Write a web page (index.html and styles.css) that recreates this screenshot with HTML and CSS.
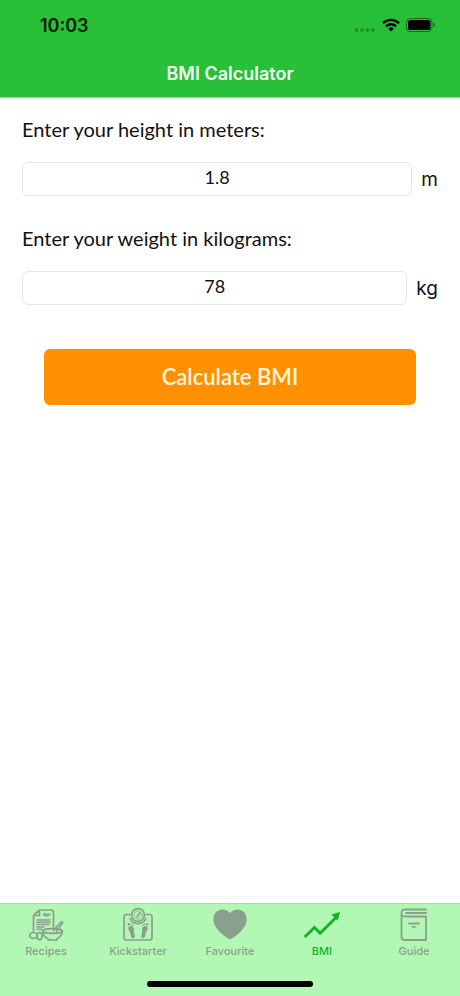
FILE: index.html
```html
<!DOCTYPE html>
<html lang="en">
<head>
  <meta charset="utf-8">
  <meta name="viewport" content="width=device-width, initial-scale=1">
  <title>BMI Calculator</title>
  <link rel="stylesheet" href="styles.css">
</head>
<body>
  <header class="header">
    <div class="status">
      <span class="time">10:03</span>
      <div class="indicators">
        <svg width="22" height="4" viewBox="0 0 22 4" fill="#000" fill-opacity=".25" aria-hidden="true"><circle cx="2.5" cy="2" r="1.9"/><circle cx="8" cy="2" r="1.9"/><circle cx="13.5" cy="2" r="1.9"/><circle cx="19" cy="2" r="1.9"/></svg>
        <svg class="wifi" width="18" height="14" viewBox="0 0 18 14" fill="none" stroke="#000" stroke-width="2.4" aria-hidden="true"><path d="M1 5.1a11.5 11.5 0 0 1 16 0M4 8.3a7.2 7.2 0 0 1 10 0"/><path d="M6.2 10.7a4 4 0 0 1 5.6 0L9 13.6z" fill="#000" stroke="none"/></svg>
        <svg width="30" height="14" viewBox="0 0 30 14" aria-hidden="true"><rect x=".5" y=".5" width="25.5" height="13" rx="4" fill="none" stroke="#000" stroke-opacity=".45"/><rect x="2" y="2" width="22.5" height="10" rx="2.6"/><path d="M27.5 4.8q1.6.7 1.6 2.2t-1.6 2.2z" fill-opacity=".5"/></svg>
      </div>
    </div>
    <h1 class="title">BMI Calculator</h1>
  </header>

  <main class="content">
    <form class="form">
      <div class="field">
        <label for="height">Enter your height in meters:</label>
        <div class="row"><input id="height" type="text" inputmode="decimal" value="1.8"><span class="unit">m</span></div>
      </div>
      <div class="field">
        <label for="weight">Enter your weight in kilograms:</label>
        <div class="row"><input id="weight" type="text" inputmode="decimal" value="78"><span class="unit">kg</span></div>
      </div>
      <button class="submit" type="button">Calculate BMI</button>
    </form>
  </main>

  <footer class="footer">
    <nav class="tabs">
      <a class="tab" href="#recipes">
        <svg width="36" height="36" viewBox="0 0 36 36" fill="none" stroke="currentColor" stroke-width="1.7" stroke-linejoin="round" stroke-linecap="round" aria-hidden="true">
          <path d="M5.500 24V8.500l6-5.500H23q2.500 0 2.500 2.500V20M11.500 3v5.500h-6"/>
          <path d="M15 7.200q1.200 3 3.500 1.500 2.300 1.500 3.500-1.500z" fill="currentColor" stroke-width=".8"/>
          <path d="M9 13h13M9 15.300h13M9 17.600h12M9 19.900h7M9 22.200h5" stroke-width="1.500"/>
          <ellipse cx="24.500" cy="24" rx="9.800" ry="2.400"/>
          <path d="M14.700 24q.3 5.500 5.300 7.800v1.200h9v-1.200q5-2.300 5.300-7.800M25.500 23.500l7-8q2-1.500 2.200.3L28.500 24"/>
          <ellipse cx="5.500" cy="28.500" rx="3.700" ry="3"/>
          <ellipse cx="11.600" cy="29" rx="2.500" ry="3.700"/>
        </svg>
        <span>Recipes</span>
      </a>
      <a class="tab" href="#kickstarter">
        <svg width="36" height="36" viewBox="0 0 36 36" fill="none" stroke="currentColor" stroke-width="1.700" stroke-linejoin="round" stroke-linecap="round" aria-hidden="true">
          <path d="M10 7.500H6.500Q4 7.500 4 10v20.500Q4 33 6.500 33h23q2.500 0 2.500-2.500V10q0-2.500-2.500-2.500H26"/>
          <circle cx="18" cy="8" r="6.400"/><circle cx="18" cy="8" r="4" stroke-width=".7"/>
          <path d="M17.200 9.700L20 5.700M10 11.500a8.800 8.800 0 0 0 16 0"/>
          <g fill="currentColor" stroke="none">
            <path d="M8.400 20.500c.6-2 4-1.900 5.200.6 1.100 2.500-.4 3.400.6 5.600 1.200 2.600.8 4.300-.8 4.600-1.900.3-2.500-1.500-2.800-4-.3-2.600-2.900-4.300-2.200-6.800z"/>
            <path d="M27.600 20.500c-.6-2-4-1.900-5.200.6-1.100 2.500.4 3.400-.6 5.600-1.200 2.600-.8 4.300.8 4.600 1.900.3 2.500-1.500 2.800-4 .3-2.600 2.900-4.300 2.200-6.800z"/>
            <circle cx="8.800" cy="17.300" r="1.200"/><circle cx="11.200" cy="17.300" r=".8"/><circle cx="13" cy="18.300" r=".8"/>
            <circle cx="27.200" cy="17.300" r="1.200"/><circle cx="24.800" cy="17.300" r=".8"/><circle cx="23" cy="18.300" r=".8"/>
          </g>
        </svg>
        <span>Kickstarter</span>
      </a>
      <a class="tab" href="#favourite">
        <svg width="36" height="36" viewBox="0 0 36 36" fill="currentColor" aria-hidden="true"><path d="M18 6.200C21.500 1.500 28.500 1.500 32.300 5.500c4 5 2.500 11.500-1.500 16.500-3.500 4.500-8 8.200-12.800 10.500C13.200 30.200 8.700 26.500 5.200 22 1.200 17-.3 10.500 3.700 5.500c3.800-4 10.800-4 14.300.7z"/></svg>
        <span>Favourite</span>
      </a>
      <a class="tab active" href="#bmi" aria-current="page">
        <svg width="36" height="36" viewBox="0 0 36 36" fill="none" stroke="currentColor" stroke-width="2.800" aria-hidden="true"><path d="M.8 30L10.500 20.500l5.700 5.700L33 9.500"/><path d="M36 5l-2.300 8.700-6.200-6.200z" fill="currentColor" stroke="none"/></svg>
        <span>BMI</span>
      </a>
      <a class="tab" href="#guide">
        <svg width="36" height="36" viewBox="0 0 36 36" fill="none" stroke="currentColor" stroke-width="1.800" stroke-linejoin="round" stroke-linecap="round" aria-hidden="true"><path d="M30 2.500H9Q5.500 2.500 5.500 6V30q0 3 3 3H30V9.500H9Q5.500 9.500 5.500 6M30 6H10"/><path d="M13 16.500h10M16.500 19.800h2.500"/></svg>
        <span>Guide</span>
      </a>
    </nav>
    <div class="home-bar"></div>
  </footer>
</body>
</html>
```

FILE: styles.css
```css
* {
  box-sizing: border-box;
}

body {
  margin: 0;
  min-height: 100vh;
  display: flex;
  flex-direction: column;
  background: #fff;
  color: #111;
  font-family: Inter, "Liberation Sans", sans-serif;
}

.header {
  background: #28c038;
  border-bottom: 1px solid #8bdc93;
}

.status {
  display: flex;
  align-items: center;
  justify-content: space-between;
  height: 50px;
  padding: 0 24px 0 40px;
}

.time {
  color: #041806;
  font-size: 18px;
  font-weight: 600;
}

.indicators {
  display: flex;
  align-items: center;
  gap: 6px;
}

.indicators svg:first-child {
  align-self: flex-end;
}

.title {
  margin: 0;
  color: #f1fff2;
  font-size: 18px;
  font-weight: 600;
  line-height: 47px;
  text-align: center;
}

.content {
  flex: 1;
  padding: 19px 22px;
}

.form {
  display: flex;
  flex-direction: column;
  font-family: Lato, sans-serif;
}

.field {
  margin-bottom: 30px;
}

.field label {
  display: block;
  margin-bottom: 21px;
  font-size: 20px;
  line-height: 24px;
}

.row {
  display: flex;
  align-items: center;
  gap: 9px;
}

.row input {
  flex: 1;
  min-width: 0;
  height: 34px;
  padding: 0 0 4px;
  border: 1px solid #e6e6e6;
  border-radius: 6px;
  background: #fff;
  color: #111;
  font-family: Lato, sans-serif;
  font-size: 18px;
  text-align: center;
}

.unit {
  font-family: Inter, sans-serif;
  font-size: 19px;
}

.submit {
  height: 56px;
  margin: 14px 22px 0;
  padding: 0 0 2px;
  border: 0;
  border-radius: 6px;
  background: #ff9100;
  color: #fff6dc;
  font-family: Lato, sans-serif;
  font-size: 22px;
  font-weight: 600;
}

.footer {
  background: #b2f8b4;
  border-top: 1px solid #a9dcab;
}

.tabs {
  display: grid;
  grid-template-columns: repeat(5, 1fr);
  padding-top: 3px;
}

.tab {
  display: flex;
  flex-direction: column;
  align-items: center;
  color: #8aa08c;
  font-size: 11px;
  font-weight: 500;
  line-height: 16px;
  text-decoration: none;
}

.active {
  color: #0fb422;
}

.home-bar {
  width: 36%;
  height: 6px;
  margin: 22px auto 9px;
  border-radius: 3px;
  background: #000;
}
```
